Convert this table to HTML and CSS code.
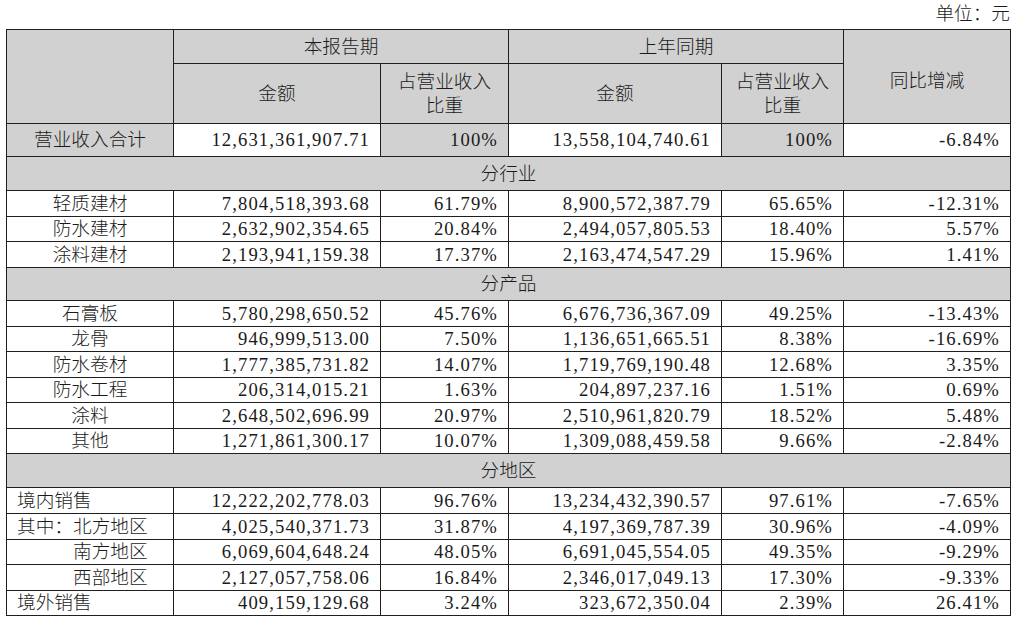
FILE: index.html
```html
<!DOCTYPE html>
<html lang="zh">
<head>
<meta charset="utf-8">
<title>营业收入构成</title>
<link rel="stylesheet" href="styles.css">
</head>
<body>
<div class="page">
  <div class="unit">单位：元</div>
  <table class="rev">
    <colgroup>
      <col class="c1"><col class="c2"><col class="c3"><col class="c4"><col class="c5"><col class="c6">
    </colgroup>
    <tbody>
      <tr class="h1">
        <td class="g" rowspan="2"></td>
        <td class="g ctr" colspan="2">本报告期</td>
        <td class="g ctr" colspan="2">上年同期</td>
        <td class="g ctr yoy" rowspan="2">同比增减</td>
      </tr>
      <tr class="h2">
        <td class="g ctr">金额</td>
        <td class="g ctr two">占营业收入<br>比重</td>
        <td class="g ctr">金额</td>
        <td class="g ctr two">占营业收入<br>比重</td>
      </tr>
      <tr class="tot">
        <td class="g ctr">营业收入合计</td>
        <td class="num">12,631,361,907.71</td>
        <td class="g num">100%</td>
        <td class="num">13,558,104,740.61</td>
        <td class="g num">100%</td>
        <td class="num">-6.84%</td>
      </tr>
      <tr class="band"><td class="g ctr" colspan="6">分行业</td></tr>
      <tr class="r26"><td class="ctr">轻质建材</td><td class="num">7,804,518,393.68</td><td class="num">61.79%</td><td class="num">8,900,572,387.79</td><td class="num">65.65%</td><td class="num">-12.31%</td></tr>
      <tr class="r25"><td class="ctr">防水建材</td><td class="num">2,632,902,354.65</td><td class="num">20.84%</td><td class="num">2,494,057,805.53</td><td class="num">18.40%</td><td class="num">5.57%</td></tr>
      <tr class="r26"><td class="ctr">涂料建材</td><td class="num">2,193,941,159.38</td><td class="num">17.37%</td><td class="num">2,163,474,547.29</td><td class="num">15.96%</td><td class="num">1.41%</td></tr>
      <tr class="band b33"><td class="g ctr" colspan="6">分产品</td></tr>
      <tr class="r26"><td class="ctr">石膏板</td><td class="num">5,780,298,650.52</td><td class="num">45.76%</td><td class="num">6,676,736,367.09</td><td class="num">49.25%</td><td class="num">-13.43%</td></tr>
      <tr class="r25"><td class="ctr">龙骨</td><td class="num">946,999,513.00</td><td class="num">7.50%</td><td class="num">1,136,651,665.51</td><td class="num">8.38%</td><td class="num">-16.69%</td></tr>
      <tr class="r26"><td class="ctr">防水卷材</td><td class="num">1,777,385,731.82</td><td class="num">14.07%</td><td class="num">1,719,769,190.48</td><td class="num">12.68%</td><td class="num">3.35%</td></tr>
      <tr class="r25"><td class="ctr">防水工程</td><td class="num">206,314,015.21</td><td class="num">1.63%</td><td class="num">204,897,237.16</td><td class="num">1.51%</td><td class="num">0.69%</td></tr>
      <tr class="r26"><td class="ctr">涂料</td><td class="num">2,648,502,696.99</td><td class="num">20.97%</td><td class="num">2,510,961,820.79</td><td class="num">18.52%</td><td class="num">5.48%</td></tr>
      <tr class="r25"><td class="ctr">其他</td><td class="num">1,271,861,300.17</td><td class="num">10.07%</td><td class="num">1,309,088,459.58</td><td class="num">9.66%</td><td class="num">-2.84%</td></tr>
      <tr class="band"><td class="g ctr" colspan="6">分地区</td></tr>
      <tr class="r26"><td class="lft">境内销售</td><td class="num">12,222,202,778.03</td><td class="num">96.76%</td><td class="num">13,234,432,390.57</td><td class="num">97.61%</td><td class="num">-7.65%</td></tr>
      <tr class="r26"><td class="lft">其中：北方地区</td><td class="num">4,025,540,371.73</td><td class="num">31.87%</td><td class="num">4,197,369,787.39</td><td class="num">30.96%</td><td class="num">-4.09%</td></tr>
      <tr class="r25"><td class="lft ind">南方地区</td><td class="num">6,069,604,648.24</td><td class="num">48.05%</td><td class="num">6,691,045,554.05</td><td class="num">49.35%</td><td class="num">-9.29%</td></tr>
      <tr class="r26"><td class="lft ind">西部地区</td><td class="num">2,127,057,758.06</td><td class="num">16.84%</td><td class="num">2,346,017,049.13</td><td class="num">17.30%</td><td class="num">-9.33%</td></tr>
      <tr class="r25"><td class="lft">境外销售</td><td class="num">409,159,129.68</td><td class="num">3.24%</td><td class="num">323,672,350.04</td><td class="num">2.39%</td><td class="num">26.41%</td></tr>
    </tbody>
  </table>
</div>
</body>
</html>
```

FILE: styles.css
```css
html, body {
  margin: 0;
  padding: 0;
  background: #ffffff;
}

body {
  font-family: "Liberation Serif", "Noto Sans CJK SC", serif;
  font-size: 18.67px;
  font-weight: 300;
  color: #1a1a1a;
}

.page {
  width: 1017px;
}

.unit {
  height: 29px;
  line-height: 28px;
  text-align: right;
  padding-right: 7px;
  box-sizing: border-box;
}

.rev {
  margin-left: 6px;
  border-collapse: collapse;
  table-layout: fixed;
  width: 1004px;
}

.c1 { width: 167px; }
.c2 { width: 207px; }
.c3 { width: 128px; }
.c4 { width: 213px; }
.c5 { width: 122px; }
.c6 { width: 167px; }

.rev td {
  border: 1px solid #1f1f1f;
  padding: 0 10px;
  line-height: 22px;
  white-space: nowrap;
  vertical-align: middle;
  overflow: hidden;
}

.rev td.g {
  background: #d1d1d1;
}

.rev td.ctr {
  text-align: center;
}

.rev td.lft {
  text-align: left;
  padding-left: 10px;
}

.rev td.ind {
  padding-left: 66px;
}

.rev td.num {
  text-align: right;
  letter-spacing: 1.1px;
  padding-right: 10px;
}

.rev td.two {
  line-height: 24px;
}

.rev td.yoy {
  padding-top: 8px;
}

.h1 { height: 34px; }
.h2 { height: 60px; }
.tot { height: 33px; }
.band { height: 34px; }
.band.b33 { height: 33px; }
.r26 { height: 26px; }
.r25 { height: 25px; }
```
